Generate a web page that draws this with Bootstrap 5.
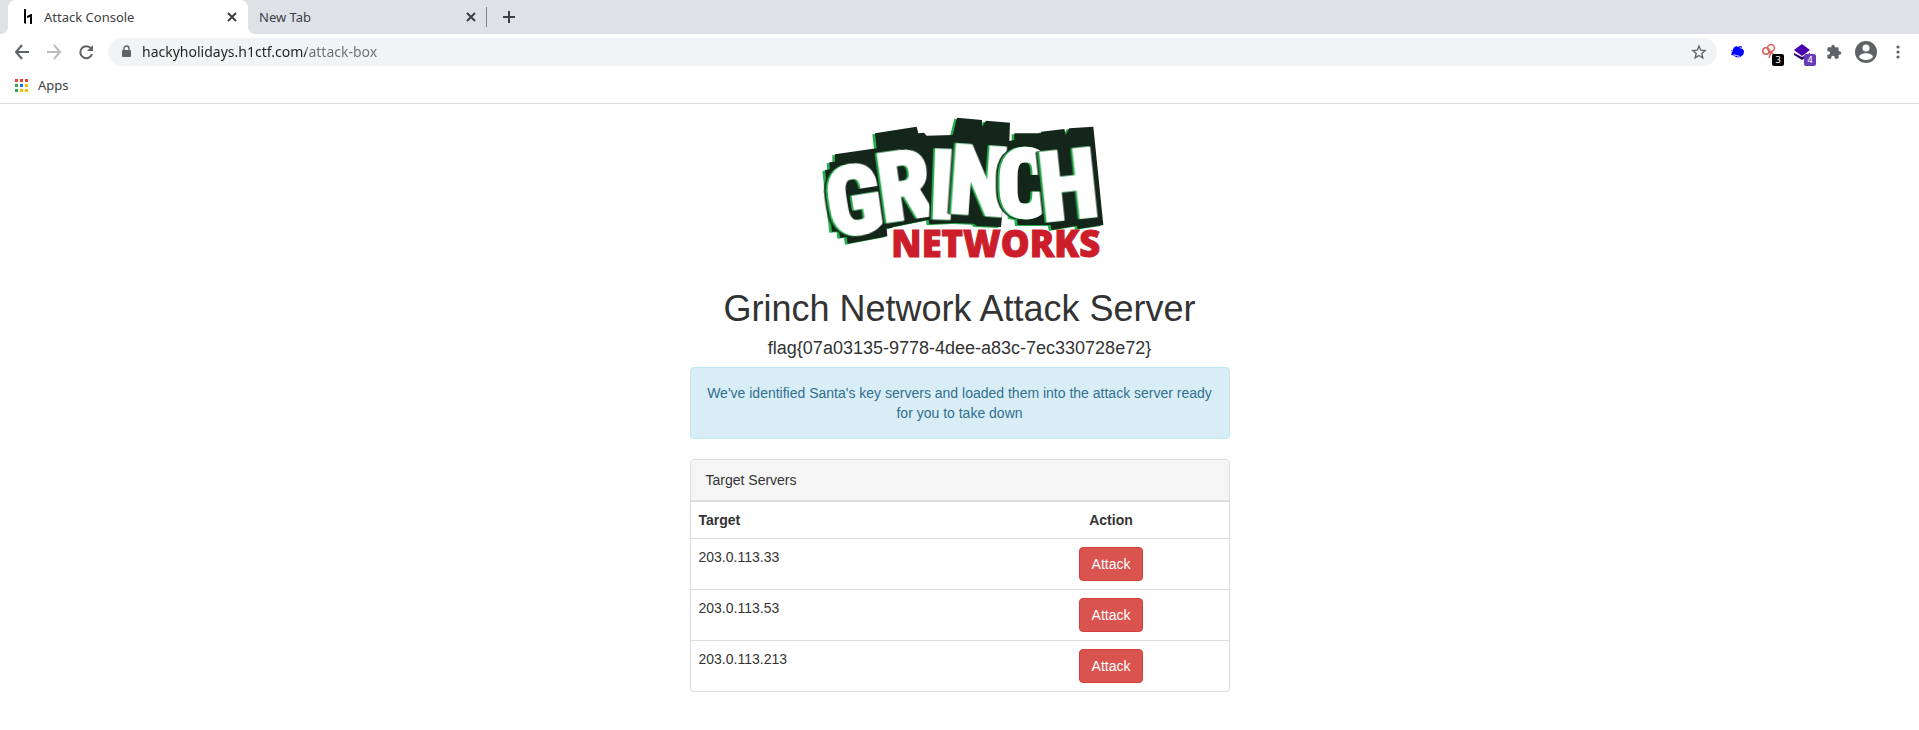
<!DOCTYPE html>
<html lang="en">
<head>
<meta charset="utf-8">
<meta name="viewport" content="width=device-width, initial-scale=1">
<title>Attack Console</title>
<link href="https://cdn.jsdelivr.net/npm/bootstrap@5.3.0/dist/css/bootstrap.min.css" rel="stylesheet">
<style>
body{font:14px/20px "Liberation Sans",Arial,sans-serif;color:#333;background:#fff}
.chrome{font-family:"Noto Sans",sans-serif;font-size:13px;line-height:20px;color:#3c4043;border-bottom:1px solid #d9dadc}
.chrome button,.chrome a{border:0;background:none;padding:0;color:#5f6368;display:flex;align-items:center;justify-content:center}
.chrome svg{display:block}
.tabstrip{height:34px;background:#dee1e6;padding-left:8px}
.tab{width:240px;height:34px;padding:0 8px 0 14px}
.tab.current{background:#fff;border-radius:8px 8px 0 0;position:relative}
.tab.current::before,.tab.current::after{content:"";position:absolute;bottom:0;width:8px;height:8px}
.tab.current::before{right:100%;background:radial-gradient(circle at 0 0,#dee1e6 8px,#fff 8px)}
.tab.current::after{left:100%;background:radial-gradient(circle at 100% 0,#dee1e6 8px,#fff 8px)}
.tab.idle{width:238px;padding-left:11px;padding-right:7px}
.divider{width:1px;height:20px;background:#80868b}
.newtab{width:44px}
.toolbar{height:36px;padding-left:6px;padding-right:5px}
.tool{width:32px;height:32px}
.chrome a.apps{color:#3c4043;text-decoration:none;gap:10px;justify-content:flex-start}
.omnibox{height:28px;background:#f1f3f4;border-radius:14px;margin-left:6px;margin-right:5px;padding:0 10px 0 13px}
.omnibox input{border:0;outline:0;padding:0;margin-left:10px;font-size:14px;color:#202124;
 background:linear-gradient(90deg,#202124 164px,#6b7075 164px);-webkit-background-clip:text;background-clip:text;-webkit-text-fill-color:transparent}
.count{position:absolute;left:18px;top:18px;width:12px;height:12px;border-radius:2px;color:#fff;font:9px/12px "DejaVu Sans",sans-serif;text-align:center}
.bookmarks{height:33px;padding-left:15px;padding-bottom:3px}
main{max-width:540px}
.logo{display:block;margin:0 auto 20px}
h1{font-size:36px;line-height:40px;font-weight:400;margin:0 0 9px}
h4{font-size:18px;line-height:20px;font-weight:400;margin:0 0 9px}
.alert-info{background:#d9edf7;border-color:#bce8f1;color:#31708f;padding:15px;margin-bottom:20px;border-radius:4px}
.card{border-color:#ddd;border-radius:4px;box-shadow:0 1px 1px rgba(0,0,0,.05)}
.card-header{background:#f5f5f5;border-color:#ddd;padding:10px 15px}
.table{color:#333;border-color:#ddd}
.table>:not(caption)>*>*{padding:8px;border-width:1px 0 0;border-color:#ddd}
.action{width:235px}
.btn-danger{background:#d9534f;border-color:#d43f3a;font-size:14px;line-height:20px;padding:6px 12px;border-radius:4px}
.wordmark{font-family:'Liberation Sans Narrow','Roboto Condensed','Liberation Sans',sans-serif;font-weight:700;font-size:280px;fill:#fff;stroke:#fff;stroke-width:14px;stroke-linejoin:miter;text-anchor:middle}
.wordmark text{filter:drop-shadow(-3px 0 0 #27ae4d) drop-shadow(-3px 0 0 #27ae4d) drop-shadow(-5px 0 0 #14261a)}
</style>
</head>
<body>
<header class="chrome">
 <div class="tabstrip d-flex align-items-center">
  <div class="tab current d-flex align-items-center">
   <svg width="14" height="16" viewBox="0 0 14 16"><path d="M2 0h2v15l-2-1zM7 6l2-1h1v10H8V8L5 9V7z"/></svg>
   <span class="flex-grow-1 ms-2">Attack Console</span>
   <button aria-label="Close tab"><svg width="16" height="16" stroke="#3c4043" stroke-width="2"><path d="M4 4l8 8M12 4l-8 8"/></svg></button>
  </div>
  <div class="tab idle d-flex align-items-center">
   <span class="flex-grow-1">New Tab</span>
   <button aria-label="Close tab"><svg width="16" height="16" stroke="#3c4043" stroke-width="2"><path d="M4 4l8 8M12 4l-8 8"/></svg></button>
  </div>
  <div class="divider"></div>
  <button class="newtab" aria-label="New tab"><svg width="14" height="14" stroke="#3c4043" stroke-width="2"><path d="M7 1v12M1 7h12"/></svg></button>
 </div>
 <div class="toolbar d-flex align-items-center">
  <button class="tool" aria-label="Back"><svg width="16" height="16" fill="none" stroke="#5f6368" stroke-width="2"><path d="M15 8H2M8 1L2 8l6 7"/></svg></button>
  <button class="tool" aria-label="Forward"><svg width="16" height="16" fill="none" stroke="#babcbe" stroke-width="2"><path d="M1 8h13M8 1l6 7-6 7"/></svg></button>
  <button class="tool" aria-label="Reload"><svg width="16" height="16" fill="none" stroke="#5f6368" stroke-width="2"><path d="M13 4.500A6 6 0 1 0 14 10"/><path d="M15 1v6H9z" fill="#5f6368" stroke="none"/></svg></button>
  <div class="omnibox d-flex align-items-center flex-grow-1">
   <svg width="11" height="14" viewBox="0 0 11 14"><rect x="1" y="5" width="9" height="7" rx="1" fill="#5f6368"/><path d="M3 5.500V3.500a2.500 2.500 0 0 1 5 0v2" fill="none" stroke="#5f6368" stroke-width="1.400"/></svg>
   <input class="flex-grow-1" type="text" aria-label="Address" value="hackyholidays.h1ctf.com/attack-box">
   <button aria-label="Bookmark this page"><svg width="16" height="16" viewBox="0 0 24 24" fill="none" stroke="#5f6368" stroke-width="2"><path d="M12 3l2.600 6.200 6.700.6-5.100 4.400 1.500 6.600-5.700-3.500-5.700 3.500 1.500-6.600L2.700 9.800l6.700-.6z"/></svg></button>
  </div>
  <button class="tool" aria-label="Extension"><svg width="14" height="14" viewBox="0 0 16 16"><path d="M3 3l3-2 1 1 5-1 1 3 2 3-1 4-4 3H6l-3-2-3-1 1-2-1-3h2z" fill="#00f"/><path d="M0 7h2M10 3l3 1M3 11l3 1 4 1M13 1v3" fill="none" stroke="#fff"/></svg></button>
  <button class="tool position-relative" aria-label="Extension, 3"><svg width="16" height="16" fill="none" stroke="#d9615e" stroke-width="1.500"><circle cx="4" cy="7" r="3.200"/><circle cx="9" cy="4" r="3.500"/><path d="M7 14l2-6 5 5M6 9l3-1"/></svg><span class="count" style="background:#000">3</span></button>
  <button class="tool position-relative" aria-label="Extension, 4"><svg width="16" height="16"><path d="M0 9l8 4 8-4v2l-8 5-8-5z" fill="#2c0a72"/><path d="M0 6l8-6 8 6-8 6z" fill="#4b00b0"/></svg><span class="count" style="background:#673ab7">4</span></button>
  <button class="tool" aria-label="Extensions"><svg width="16" height="16" viewBox="0 0 24 24" fill="#5f6368"><path d="M20.500 11H19V7a2 2 0 0 0-2-2h-4V3.500a2.500 2.500 0 0 0-5 0V5H4a2 2 0 0 0-2 2v3.800h1.500a2.700 2.700 0 0 1 0 5.400H2V20a2 2 0 0 0 2 2h3.800v-1.500a2.700 2.700 0 0 1 5.400 0V22H17a2 2 0 0 0 2-2v-4h1.500a2.500 2.500 0 0 0 0-5z"/></svg></button>
  <button class="tool" aria-label="Profile"><svg width="22" height="22" viewBox="0 0 22 22"><circle cx="11" cy="11" r="11" fill="#5f6368"/><circle cx="11" cy="7" r="3.500" fill="#fff"/><path d="M4 16c1-5 13-5 14 0-3 4-11 4-14 0z" fill="#fff"/></svg></button>
  <button class="tool" aria-label="Menu"><svg width="4" height="14" fill="#5f6368"><circle cx="2" cy="2" r="1.600"/><circle cx="2" cy="7" r="1.600"/><circle cx="2" cy="12" r="1.600"/></svg></button>
 </div>
 <nav class="bookmarks d-flex align-items-center" aria-label="Bookmarks">
  <a class="apps" href="#"><svg width="13" height="13"><path d="M0 0h3v3H0zM5 0h3v3H5zM10 0h3v3h-3z" fill="#ea4335"/><path d="M0 5h3v3H0zM0 10h3v3H0z" fill="#34a853"/><path d="M5 5h3v3H5z" fill="#1a73e8"/><path d="M10 5h3v3h-3zM5 10h3v3H5zM10 10h3v3h-3z" fill="#fbbc04"/></svg>Apps</a>
 </nav>
</header>
<main class="mx-auto text-center">
 <svg class="logo" width="310" height="165" viewBox="-15 -3 930 495" role="img" aria-label="Grinch Networks">
  <defs>
   <path id="plate" d="M45 195l15-2-2-21 17-2v-22l125-18-5-45 125-20 5 20 17-2 8 9 78-2 13-52 75 7v20l12-18 72 6-2 55 15-3V85h80l1-5 69-8 4 18 11-20 72-5 30 295-77 12-2-10-76 13-4-15h-98l-2-17-20-5v-20l-22-15-6 63-73-3-9-7-56-2-77 4-2-14-108 22-2 3-16 1 2 24-119 22-3-20-20 2-2-19-22 1z"/>
  </defs>
  <use href="#plate" x="-8" y="3" fill="#27ae4d"/>
  <use href="#plate" fill="#14261a"/>
  <g class="wordmark">
   <text transform="translate(148 382) rotate(-9)">G</text>
   <text transform="translate(296 338) rotate(-8)">R</text>
   <text transform="translate(395 337) rotate(2)">I</text>
   <text transform="translate(500 325) rotate(4)">N</text>
   <text transform="translate(643 334)">C</text>
   <text transform="translate(786 336) rotate(-6)">H</text>
  </g>
  <text x="244" y="457" font-family="'Open Sans',sans-serif" font-weight="800" font-size="109" fill="#cc1d2a" stroke="#cc1d2a" stroke-width="3">NETWORKS</text>
 </svg>
 <h1>Grinch Network Attack Server</h1>
 <h4>flag{07a03135-9778-4dee-a83c-7ec330728e72}</h4>
 <div class="alert alert-info">We've identified Santa's key servers and loaded them into the attack server ready for you to take down</div>
 <div class="card text-start">
  <div class="card-header">Target Servers</div>
  <table class="table mb-0">
   <thead><tr><th scope="col">Target</th><th scope="col" class="action text-center">Action</th></tr></thead>
   <tbody>
    <tr><td>203.0.113.33</td><td class="text-center"><button class="btn btn-danger">Attack</button></td></tr>
    <tr><td>203.0.113.53</td><td class="text-center"><button class="btn btn-danger">Attack</button></td></tr>
    <tr><td>203.0.113.213</td><td class="text-center"><button class="btn btn-danger">Attack</button></td></tr>
   </tbody>
  </table>
 </div>
</main>
<script src="https://cdn.jsdelivr.net/npm/bootstrap@5.3.0/dist/js/bootstrap.bundle.min.js"></script>
</body>
</html>
